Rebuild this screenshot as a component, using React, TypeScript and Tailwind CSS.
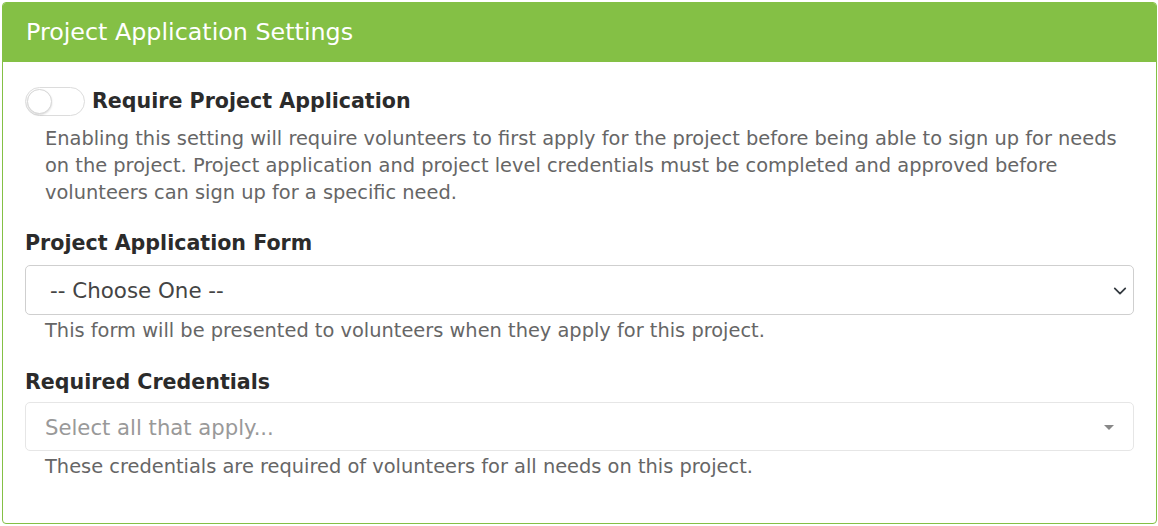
import { useState } from "react";

const FONT = { fontFamily: "Verdana, 'DejaVu Sans', sans-serif" };

function Toggle({ on, onChange }: { on: boolean; onChange: (v: boolean) => void }) {
  return (
    <button
      type="button"
      onClick={() => onChange(!on)}
      className={`relative w-[60px] h-[29px] rounded-full border shrink-0 ${on ? "bg-[#84c045] border-[#84c045]" : "bg-white border-[#dcdcdc]"}`}
    >
      <span
        className={`absolute top-[1px] w-[25px] h-[25px] rounded-full bg-white border border-[#d6d6d6] shadow-[0_1px_2px_rgba(0,0,0,0.15)] ${on ? "left-[32px]" : "left-[1px]"}`}
      />
    </button>
  );
}

export default function App() {
  const [required, setRequired] = useState(false);

  return (
    <div className="w-[1158px] h-[526px] bg-white p-[2px]" style={FONT}>
      <div className="w-[1155px] h-[522px] border border-[#84c045] rounded-[4px] overflow-hidden bg-white">
        <div className="h-[59px] bg-[#84c045] px-[23px] flex items-center">
          <h2 className="text-[23.8px] text-white font-normal">Project Application Settings</h2>
        </div>

        <div className="px-[22px] pt-[24px]">
          <div className="flex items-center gap-[7px]">
            <Toggle on={required} onChange={setRequired} />
            <span className="text-[20.6px] font-bold text-[#2b2b2b]">Require Project Application</span>
          </div>
          <p className="mt-[8px] pl-[20px] text-[19.4px] leading-[27px] text-[#666]">
            Enabling this setting will require volunteers to first apply for the project before being able to sign up for needs on the project. Project application and project level credentials must be completed and approved before volunteers can sign up for a specific need.
          </p>

          <label className="block mt-[24px] text-[20.6px] font-bold text-[#2b2b2b] leading-[27px]">Project Application Form</label>
          <div className="relative mt-[8px] w-[1109px] h-[50px] border border-[#cfcfcf] rounded-[5px] flex items-center pt-[3px] pl-[24px] text-[21.4px] text-[#444]">
            -- Choose One --
            <svg className="absolute right-[6px] top-[18px]" width="14" height="14" viewBox="0 0 16 16">
              <path d="M2 5l6 6 6-6" fill="none" stroke="#343a40" strokeWidth="2" strokeLinecap="round" strokeLinejoin="round" />
            </svg>
          </div>
          <p className="mt-[2px] pl-[20px] text-[19.4px] leading-[27px] text-[#666]">
            This form will be presented to volunteers when they apply for this project.
          </p>

          <label className="block mt-[25px] text-[20.6px] font-bold text-[#2b2b2b] leading-[27px]">Required Credentials</label>
          <div className="relative mt-[6px] w-[1109px] h-[49px] border border-[#e6e6e6] rounded-[5px] flex items-center pt-[3px] pl-[19px] text-[21.2px] text-[#999]">
            Select all that apply...
            <span className="absolute right-[19px] top-[22px] w-0 h-0 border-l-[5px] border-r-[5px] border-t-[5px] border-l-transparent border-r-transparent border-t-[#888]" />
          </div>
          <p className="mt-[2px] pl-[20px] text-[19.4px] leading-[27px] text-[#666]">
            These credentials are required of volunteers for all needs on this project.
          </p>
        </div>
      </div>
    </div>
  );
}
